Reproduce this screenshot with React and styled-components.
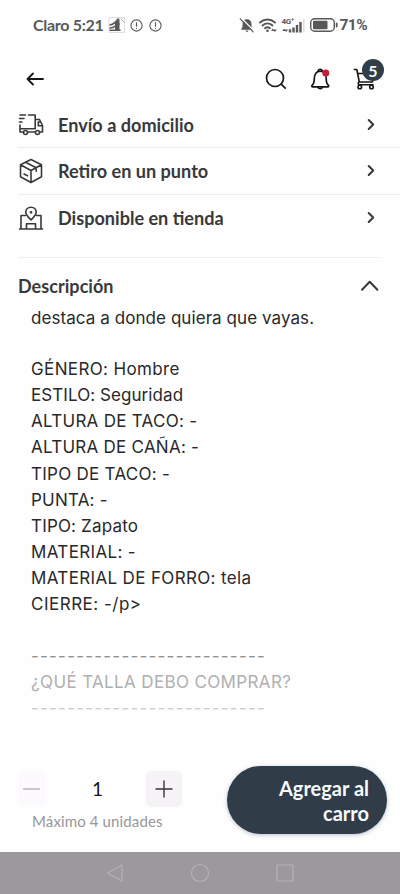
import React from 'react';
import styled, { createGlobalStyle } from 'styled-components';

const GlobalStyle = createGlobalStyle`
  * {
    box-sizing: border-box;
  }

  body {
    margin: 0;
    background: #fefefe;
    font-family: Lato, sans-serif;
    color: #39393b;
  }

  svg {
    display: block;
    flex: none;
    overflow: visible;
  }
`;

const Screen = styled.div`
  width: 400px;
  height: 894px;
  display: flex;
  flex-direction: column;
  overflow: hidden;
  background: #fefefe;
`;

const StatusBar = styled.header`
  height: 50px;
  padding: 0 33px;
  display: flex;
  align-items: center;
  justify-content: space-between;
  color: #58585a;
`;

const StatusGroup = styled.div`
  display: flex;
  align-items: center;
  gap: ${({ $gap }) => $gap}px;
`;

const StatusText = styled.span`
  font: 700 ${({ $size }) => $size}px/20px ${({ $family }) => $family}, sans-serif;
  letter-spacing: ${({ $spacing }) => $spacing}px;
  white-space: pre;
`;

const TopBar = styled.nav`
  height: 52px;
  padding: 5px 22px 0 25px;
  display: flex;
  align-items: center;
  justify-content: space-between;
  color: #161616;
`;

const Actions = styled.div`
  display: flex;
  gap: 21px;
`;

const CartButton = styled.div`
  position: relative;
`;

const Badge = styled.span`
  position: absolute;
  top: -8px;
  left: 8px;
  width: 22px;
  height: 22px;
  border-radius: 50%;
  background: #2f3e48;
  color: #f4f8fa;
  font: 700 16px/23px Lato, sans-serif;
  text-align: center;
`;

const DeliveryList = styled.ul`
  margin: 0;
  padding: 0 0 0 18px;
  list-style: none;
`;

const DeliveryRow = styled.li`
  height: ${({ $height }) => $height}px;
  padding-right: 24px;
  display: flex;
  align-items: center;
  border-bottom: ${({ $last }) => ($last ? 'none' : '1px solid #eeeeee')};
`;

const RowLabel = styled.span`
  flex: 1;
  margin-left: 14px;
  font: 700 18.1px/24px Lato, sans-serif;
`;

const Description = styled.section`
  margin: 16px 20px 0 18px;
  border-top: 1px solid #efefef;
`;

const DescriptionHead = styled.div`
  height: 47px;
  padding-top: 9px;
  display: flex;
  align-items: center;
  justify-content: space-between;
`;

const Heading = styled.h2`
  margin: 0;
  font: 700 18px/24px Lato, sans-serif;
  letter-spacing: 0.05px;
`;

const Body = styled.div`
  padding-left: 13px;
`;

const Line = styled.div`
  height: ${({ $height }) => $height}px;
  font: 400 17px/26px Inter, sans-serif;
  letter-spacing: ${({ $spacing }) => $spacing}px;
  color: ${({ $color }) => $color};
  white-space: pre;
`;

const BuyBar = styled.footer`
  margin-top: auto;
  height: 86px;
  padding: 0 13px 0 18px;
  display: flex;
  justify-content: space-between;
  align-items: flex-start;
`;

const Quantity = styled.div`
  padding-top: 4px;
`;

const Stepper = styled.div`
  display: flex;
  width: 164px;
  align-items: center;
  justify-content: space-between;
  color: #161616;
`;

const Amount = styled.span`
  padding-left: 3px;
  font: 400 19px/37px Lato, sans-serif;
`;

const StepButton = styled.button`
  width: ${({ $width }) => $width}px;
  height: 36px;
  padding: 0;
  border: 0;
  border-radius: 5px;
  display: grid;
  place-items: center;
  background: ${({ $muted }) => ($muted ? '#fcfafd' : '#f6f3f7')};
  color: ${({ $muted }) => ($muted ? '#b8b5b9' : '#39363b')};
`;

const Limit = styled.div`
  margin: 4px 0 0 14px;
  font: 400 15px/20px Lato, sans-serif;
  letter-spacing: 0.13px;
  color: #99979a;
`;

const AddButton = styled.button`
  width: 160px;
  height: 68px;
  padding: 1px 18px 0 36px;
  border: 0;
  border-radius: 34px;
  background: #303d49;
  box-shadow: 0 1px 4px rgba(48, 80, 120, 0.35);
  color: #f6fbff;
  font: 700 20px/25px Lato, sans-serif;
  text-align: right;
`;

const SystemNav = styled.div`
  height: 42px;
  display: flex;
  align-items: center;
  justify-content: center;
  gap: 67px;
  background: #9b999b;
  color: #b4b2b4;
`;

const Svg = ({ w, h, stroke = 1.6, children }) => (
  <svg
    width={w}
    height={h}
    viewBox={`0 0 ${w} ${h}`}
    fill="none"
    stroke="currentColor"
    strokeWidth={stroke}
    strokeLinecap="round"
    strokeLinejoin="round"
  >
    {children}
  </svg>
);

const Alert = () => (
  <Svg w={13} h={13} stroke={1.1}>
    <circle cx="6.5" cy="6.5" r="5.6" />
    <path d="M6.5 3.5v3.8M6.5 9.2v.3" />
  </Svg>
);

const Landmark = () => (
  <Svg w={16} h={16} stroke={1}>
    <path d="M.5.5h15v15H.5z" stroke="#dddddd" />
    <path d="M10.5 1.5v12H6V6z" fill="currentColor" stroke="none" />
    <path d="M1 8c3.5-.5 5.5-2.5 8-6M1 11c4 0 5-2 9-4M1 13.2h10" strokeWidth="1.6" />
    <path d="M12 2l3 3" stroke="#aaaaaa" />
  </Svg>
);

const Muted = () => (
  <Svg w={14} h={15} stroke={1.2}>
    <path
      d="M7 1.2c3 0 4.500 2 4.500 5v3l1.500 2.500H1L2.500 9V6c0-3 1.500-4.800 4.500-4.800zM5.300 12.500h3.400L7 14.300z"
      fill="currentColor"
      stroke="none"
    />
    <path d="M1.3.2l13 13" stroke="#fefefe" strokeWidth="1.4" />
    <path d="M.2.8l13 13" />
  </Svg>
);

const Wifi = () => (
  <Svg w={18} h={15} stroke={1.9}>
    <path d="M1 4.5c4.500-4 10.500-4 15 0M3.500 7.500c3-2.600 7-2.600 10 0M6 10.200c1.500-1.200 3.500-1.200 5 0" />
    <circle cx="8.5" cy="12.8" r="1.3" fill="currentColor" stroke="none" />
    <path d="M12 13l1.800-2.500 1.800 2.500zM14 11.500h3.800l-1.900 2.600z" fill="currentColor" stroke="none" />
  </Svg>
);

const SignalWrap = styled.div`
  position: relative;
  width: 22px;
  height: 15px;
`;

const Network = styled.span`
  position: absolute;
  top: -1px;
  left: 0;
  font: 700 8px/9px Roboto, sans-serif;
  letter-spacing: -0.3px;
`;

const Signal = () => (
  <SignalWrap>
    <Network>4G⁺</Network>
    <Svg w={22} h={15} stroke={2}>
      <path d="M8 14.5v-3.300M11.500 14.500V9.500M15 14.500V7M18.500 14.500V4" strokeWidth="2.4" strokeLinecap="butt" />
      <path d="M21.8 14.5V1" stroke="#dddddd" strokeWidth="1.5" strokeLinecap="butt" />
      <path d="M.3 13l1.800-2.500 1.800 2.500zM2.300 11.500h3.800l-1.900 2.600z" fill="currentColor" stroke="none" />
    </Svg>
  </SignalWrap>
);

const BatteryWrap = styled.div`
  margin: 0 -3px 0 1px;
`;

const Battery = () => (
  <BatteryWrap>
    <Svg w={28} h={14} stroke={1.4}>
      <rect x=".7" y=".7" width="23.6" height="12.6" rx="4" />
      <rect x="3" y="2.7" width="14.5" height="8.6" rx="1" fill="currentColor" stroke="none" />
      <path d="M26.7 5.5v3" strokeWidth="1.8" />
    </Svg>
  </BatteryWrap>
);

const Back = () => (
  <Svg w={20} h={16} stroke={1.8}>
    <path d="M18 8H2.500M8 2.500L2.500 8 8 13.500" />
  </Svg>
);

const Search = () => (
  <Svg w={24} h={24} stroke={1.7}>
    <circle cx="11" cy="11" r="8.5" />
    <path d="M17.2 17.2l4 4" />
  </Svg>
);

const Bell = () => (
  <Svg w={24} h={24} stroke={1.7}>
    <path d="M3 18.500c1.800-1.500 2.300-3 2.300-7 0-4.300 2.200-7.300 5.900-7.300s6 3 6 7.300c0 4 .5 5.500 2.300 7 .4.600.1 1.300-.6 1.300H3.600c-.7 0-1-.7-.6-1.300z" />
    <path d="M9.200 3.600c.4-1.800 3.600-1.800 4 0M9 20.500c.7 1.600 3.700 1.600 4.400 0" />
    <circle cx="16.800" cy="6" r="3.5" fill="#c91a34" stroke="none" />
  </Svg>
);

const Cart = () => (
  <Svg w={24} h={24} stroke={1.6}>
    <path d="M.3 2.500h2.500L5.300 15h13.200L20 5M5.300 15c-1.800.7-1.300 2.800.3 2.800H19M3.800 6.500H12" />
    <circle cx="5.800" cy="20" r="1.8" />
    <circle cx="17.500" cy="20" r="1.8" />
  </Svg>
);

const Truck = () => (
  <Svg w={26} h={24} stroke={1.6}>
    <path d="M2 2h5.500M10.500 2h6.700v13.800M1.500 5.500h4.500M1.500 9h2.500M2 12v7h3M10 19h7M17.200 6.500h4.300l3 6V19h-2.500M2 15.800h15.200M24.500 12.800h-4.200V9h2.200" />
    <circle cx="7.5" cy="19.500" r="2" />
    <circle cx="19.5" cy="19.500" r="2" />
  </Svg>
);

const Box = () => (
  <Svg w={26} h={26} stroke={1.6}>
    <path d="M13 1.500l10.500 5.300v12L13 24.500 2.500 18.800v-12zM2.500 6.800L13 12.500l10.500-5.700M13 12.500v12M7.500 4.200l10.700 5.600v3.500M6 16l3.500 1.800" />
  </Svg>
);

const Store = () => (
  <Svg w={26} h={25} stroke={1.6}>
    <path d="M1.500 23h23M3 23V9.500h4.500M18.500 9.500H23V23M8.500 23v-5.200h9V23M13 14c-3-3-5.200-5-5.200-7.700C7.800 3.300 10 1.300 13 1.300s5.200 2 5.200 5c0 2.700-2.200 4.700-5.200 7.700z" />
    <circle cx="13" cy="6.3" r=".6" />
  </Svg>
);

const Chevron = () => (
  <Svg w={10} h={14} stroke={2}>
    <path d="M2.700 2L7.200 6.500 2.700 11" />
  </Svg>
);

const Collapse = () => (
  <Svg w={20} h={12} stroke={2}>
    <path d="M2 9.700l7.700-8 7.700 8" />
  </Svg>
);

const delivery = [
  { label: 'Envío a domicilio', icon: <Truck />, height: 46 },
  { label: 'Retiro en un punto', icon: <Box />, height: 47 },
  { label: 'Disponible en tienda', icon: <Store />, height: 46 },
];

const ink = '#29292a';

const lines = [
  { text: 'destaca a donde quiera que vayas.', spacing: 0.07 },
  { text: '', height: 25.1 },
  { text: 'GÉNERO: Hombre', spacing: 0.37 },
  { text: 'ESTILO: Seguridad', spacing: 0.07 },
  { text: 'ALTURA DE TACO: -', spacing: 0.27 },
  { text: 'ALTURA DE CAÑA: -', spacing: 0.25 },
  { text: 'TIPO DE TACO: -', spacing: 0.27 },
  { text: 'PUNTA: -', spacing: 0.2 },
  { text: 'TIPO: Zapato', spacing: 0.17 },
  { text: 'MATERIAL: -', spacing: 0.34 },
  { text: 'MATERIAL DE FORRO: tela', spacing: 0.35 },
  { text: 'CIERRE: -/p>', spacing: 0.5 },
  { text: '' },
  { text: '--------------------------', spacing: 1.22, color: '#919191' },
  { text: '¿QUÉ TALLA DEBO COMPRAR?', spacing: 0.36, color: '#b0b0b0' },
  { text: '--------------------------', spacing: 1.22, color: '#cdcdcd' },
];

const App = () => {
  return (
    <Screen>
      <GlobalStyle />
      <StatusBar>
        <StatusGroup $gap={5.5}>
          <StatusText $size={16} $family="Lato" $spacing={-0.3}>
            Claro 5:21
          </StatusText>
          <Landmark />
          <Alert />
          <Alert />
        </StatusGroup>
        <StatusGroup $gap={5}>
          <Muted />
          <Wifi />
          <Signal />
          <Battery />
          <StatusText $size={15.5} $family="Roboto" $spacing={-0.6}>
            71%
          </StatusText>
        </StatusGroup>
      </StatusBar>
      <TopBar>
        <Back />
        <Actions>
          <Search />
          <Bell />
          <CartButton>
            <Cart />
            <Badge>5</Badge>
          </CartButton>
        </Actions>
      </TopBar>
      <DeliveryList>
        {delivery.map(({ label, icon, height }, i) => (
          <DeliveryRow key={label} $height={height} $last={i === delivery.length - 1}>
            {icon}
            <RowLabel>{label}</RowLabel>
            <Chevron />
          </DeliveryRow>
        ))}
      </DeliveryList>
      <Description>
        <DescriptionHead>
          <Heading>Descripción</Heading>
          <Collapse />
        </DescriptionHead>
        <Body>
          {lines.map(({ text, spacing = 0, color = ink, height = 26.1 }, i) => (
            <Line key={i} $spacing={spacing} $color={color} $height={height}>
              {text}
            </Line>
          ))}
        </Body>
      </Description>
      <BuyBar>
        <Quantity>
          <Stepper>
            <StepButton type="button" $width={28} $muted>
              <Svg w={18} h={18} stroke={1.4}>
                <path d="M.5 9h16" />
              </Svg>
            </StepButton>
            <Amount>1</Amount>
            <StepButton type="button" $width={36}>
              <Svg w={18} h={18} stroke={1.4}>
                <path d="M1 9h16M9 1v16" />
              </Svg>
            </StepButton>
          </Stepper>
          <Limit>Máximo 4 unidades</Limit>
        </Quantity>
        <AddButton type="button">Agregar al carro</AddButton>
      </BuyBar>
      <SystemNav>
        <Svg w={18} h={18} stroke={1.2}>
          <path d="M16 1v16L1.500 9z" />
        </Svg>
        <Svg w={18} h={18} stroke={1.2}>
          <circle cx="9" cy="9" r="8.5" />
        </Svg>
        <Svg w={18} h={18} stroke={1.2}>
          <path d="M1 1h16v16H1z" />
        </Svg>
      </SystemNav>
    </Screen>
  );
};

export default App;
